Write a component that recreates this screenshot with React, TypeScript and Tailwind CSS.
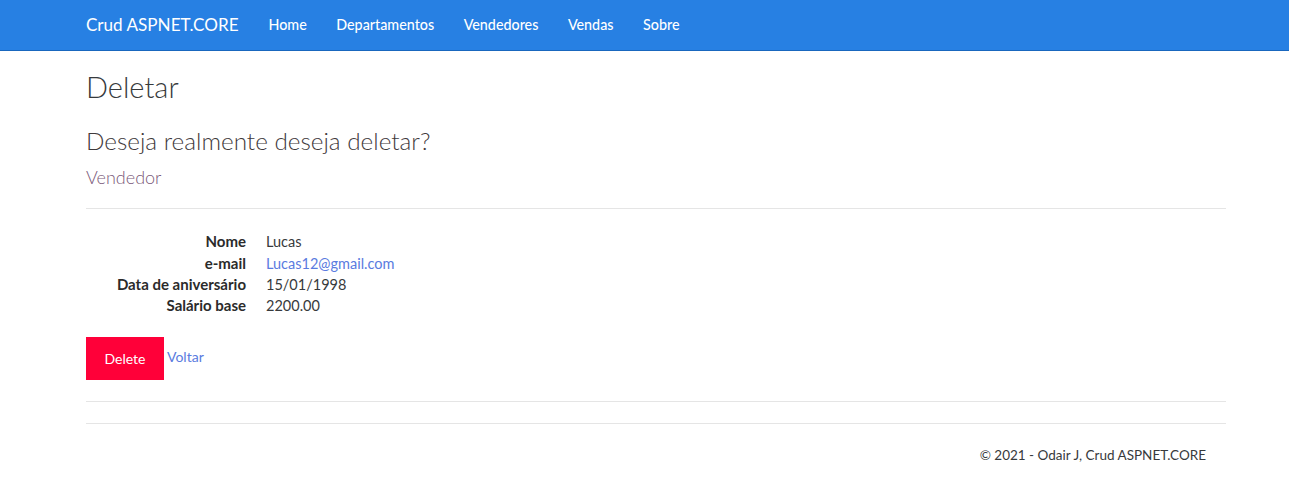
export default function App() {
  const links = ['Home', 'Departamentos', 'Vendedores', 'Vendas', 'Sobre']
  const rows: [string, string, boolean][] = [
    ['Nome', 'Lucas', false],
    ['e-mail', 'Lucas12@gmail.com', true],
    ['Data de aniversário', '15/01/1998', false],
    ['Salário base', '2200.00', false],
  ]

  return (
    <div className="min-h-[487px] bg-white text-[#373a3c]" style={{ fontFamily: 'Lato, "Open Sans", sans-serif' }}>
      {/* Navbar */}
      <nav className="h-[51px] bg-[#2780e3] border-b border-[#1967be]">
        <div className="ml-[86px] flex items-center h-full">
          <a className="text-white text-[17.1px] mr-[30px]">Crud ASPNET.CORE</a>
          <div className="flex gap-[29.5px]">
            {links.map(l => (
              <a key={l} className="text-white text-[14.3px] font-medium">{l}</a>
            ))}
          </div>
        </div>
      </nav>

      <div className="ml-[86px] w-[1140px]">
        <h1 className="text-[29px] font-light leading-none mt-[21px]">Deletar</h1>
        <h3 className="text-[24.3px] font-light leading-none mt-[28px] text-[#3f3a3c]">Deseja realmente deseja deletar?</h3>
        <h4 className="text-[18px] font-light leading-none mt-[15px] text-[#7b5a7a]">Vendedor</h4>

        <div className="mt-[22px] border-t border-[#e5e5e5]" />

        {/* Details */}
        <dl className="mt-[22px] leading-[21.3px]">
          {rows.map(([k, v, link]) => (
            <div key={k} className="flex">
              <dt className="w-[160px] text-right font-bold text-[15px] text-[#2b2b2b]">{k}</dt>
              <dd className="ml-[20px] text-[14.5px]">
                {link ? <a className="text-[#5a7be0]">{v}</a> : v}
              </dd>
            </div>
          ))}
        </dl>

        {/* Actions */}
        <div className="mt-[21px] flex items-start">
          <button className="w-[78px] h-[43px] bg-[#ff0039] text-white text-[14px]">Delete</button>
          <a className="ml-[3px] mt-[9px] text-[14px] text-[#5a7be0]">Voltar</a>
        </div>

        <div className="mt-[21px] border-t border-[#e5e5e5]" />
        <div className="mt-[21px] border-t border-[#e5e5e5]" />

        <footer className="mt-[21px] flex justify-end pr-[20px] text-[13.5px] text-[#373a3c]">
          © 2021 - Odair J, Crud ASPNET.CORE
        </footer>
      </div>
    </div>
  )
}
